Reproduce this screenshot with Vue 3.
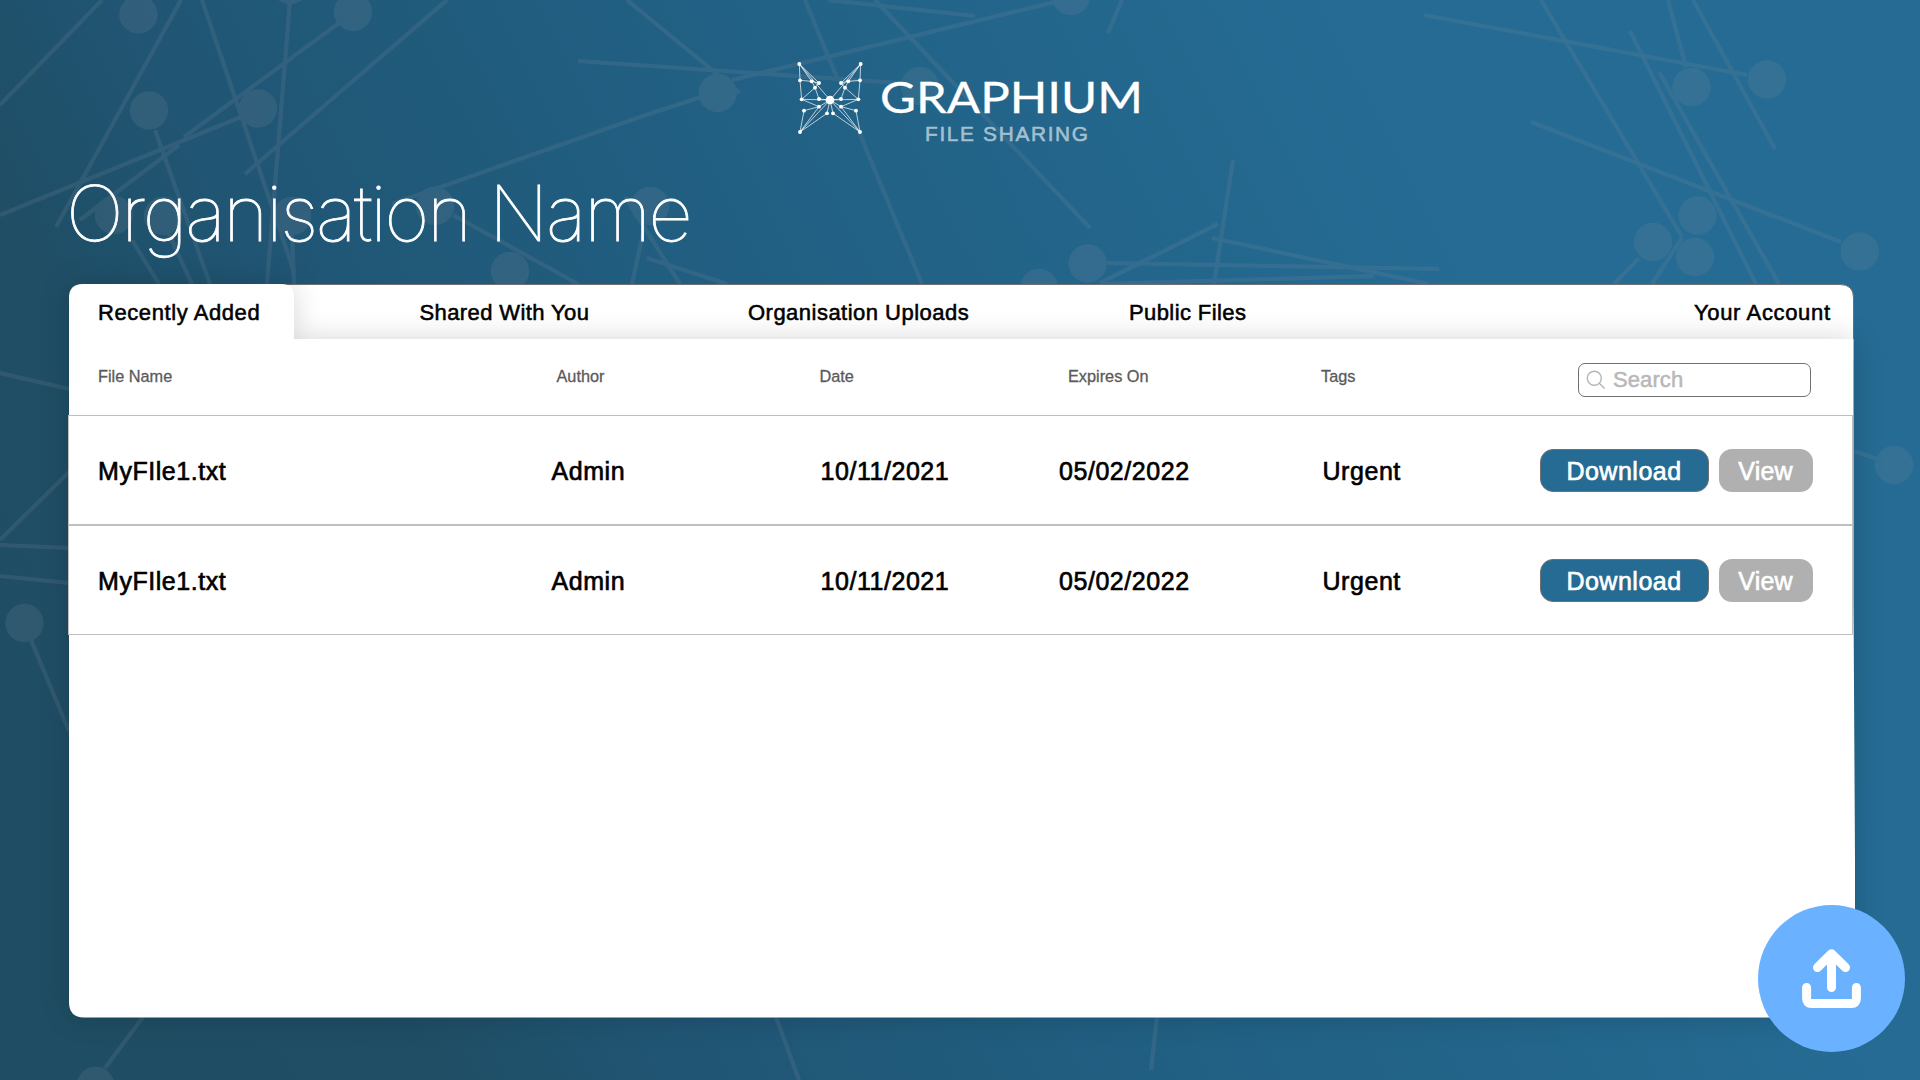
<script setup>
const links = [
  [102, 0, 0, 105], [181, 0, 56, 227], [202, 0, 294, 272], [290, 0, 267, 284],
  [339, 23, 184, 137], [241, 117, 0, 215], [447, 0, 245, 174], [179, 145, 80, 220],
  [155, 130, 210, 284], [132, 240, 159, 284], [167, 230, 192, 284], [292, 233, 294, 284],
  [640, 117, 392, 204], [453, 215, 578, 284], [627, 0, 740, 93], [643, 233, 632, 284],
  [578, 61, 899, 83], [625, 197, 680, 284], [647, 258, 727, 284], [640, 117, 701, 97],
  [805, 0, 837, 78], [859, 132, 922, 284], [828, 0, 975, 16], [875, 0, 1090, 228],
  [1055, 2, 732, 80], [1122, 0, 1108, 33], [1233, 160, 1214, 284], [1218, 224, 1100, 283],
  [1107, 263, 1439, 269], [1100, 284, 1374, 276], [1212, 238, 1429, 284],
  [1541, 0, 1682, 237], [1424, 15, 1747, 75], [1668, 0, 1686, 67], [1693, 0, 1775, 149],
  [1630, 31, 1756, 284], [1659, 72, 1779, 284], [1531, 122, 1841, 242],
  [1639, 258, 1614, 284], [1682, 238, 1652, 284], [1854, 451, 1880, 460],
  [0, 373, 69, 389], [69, 472, 0, 540], [0, 545, 69, 548], [0, 576, 69, 583],
  [31, 640, 69, 731], [143, 1017, 105, 1068], [776, 1017, 799, 1080], [1157, 1017, 1151, 1070]
]
const nodes = [
  [138.4, 14.5], [353, 12], [149, 110.5], [258, 108.5], [290, -15], [114, 215], [163, 216],
  [292, 216], [435, 206], [510, 271], [-19, 124], [717.6, 93], [920, 86], [1071, -4],
  [650, 206], [1087.7, 263.5], [1039, 288], [1691.5, 87], [1767, 79.5], [1697.5, 215.5],
  [1653, 242], [1695, 257], [1859.7, 251.5], [1894, 465], [24.5, 623], [95.5, 1086]
]

const wingDots = [
  [43, 42], [45, 91], [80, 94], [102, 99], [90, 113], [50, 148],
  [102, 147], [102, 170], [57, 182], [126, 190], [45, 246]
]
const wingPath =
  'M43 42L45 91L50 148L135 150M43 42L80 94M43 42L135 150M43 42L102 99M45 91L80 94L102 99L90 113L80 94' +
  'M90 113L50 148M90 113L102 147M50 148L102 170L135 150M102 147L135 150' +
  'M102 170L57 182L45 246L102 170M45 246L135 150M45 246L126 190L135 150'

const tabs = ['Recently Added', 'Shared With You', 'Organisation Uploads', 'Public Files', 'Your Account']
const columns = ['File Name', 'Author', 'Date', 'Expires On', 'Tags']
const files = [
  { id: 1, cells: ['MyFIle1.txt', 'Admin', '10/11/2021', '05/02/2022', 'Urgent'] },
  { id: 2, cells: ['MyFIle1.txt', 'Admin', '10/11/2021', '05/02/2022', 'Urgent'] }
]
</script>

<template>
  <div class="page">
    <svg class="network" viewBox="0 0 1920 1080" aria-hidden="true">
      <g opacity="0.18" fill="#7e8ca0" stroke="#7e8ca0">
        <line
          v-for="(l, i) in links" :key="'l' + i"
          :x1="l[0]" :y1="l[1]" :x2="l[2]" :y2="l[3]" stroke-width="4.2"
        />
        <circle v-for="(n, i) in nodes" :key="'n' + i" :cx="n[0]" :cy="n[1]" r="19.2" stroke="none" />
      </g>
    </svg>

    <header class="brand">
      <svg class="butterfly" viewBox="0 0 270 285" aria-hidden="true">
        <g v-for="side in 2" :key="side" :transform="side === 2 ? 'translate(270 0) scale(-1 1)' : undefined">
          <path :d="wingPath" fill="none" stroke="#fff" stroke-opacity="0.75" stroke-width="2.8" />
          <circle v-for="(d, i) in wingDots" :key="i" :cx="d[0]" :cy="d[1]" r="5.8" fill="#fff" />
        </g>
        <circle cx="135" cy="150" r="13" fill="#fff" />
      </svg>
      <svg class="wordmark" viewBox="0 0 270 75">
        <text class="word" x="2" y="48" textLength="263" lengthAdjust="spacingAndGlyphs">GRAPHIUM</text>
        <text class="sub" x="47" y="76" textLength="163" lengthAdjust="spacing">FILE SHARING</text>
      </svg>
    </header>

    <h1 class="title">Organisation Name</h1>

    <main class="panel">
      <svg class="sheet" viewBox="0 0 1920 1080" aria-hidden="true">
        <path d="M69.500 360V297Q69.500 284.500 82 284.500H1840Q1853.500 284.500 1853.500 298V360Z" fill="#fff" stroke="#707070" />
        <path
          class="sheet-body"
          d="M69 298Q69 284 83 284H281Q294 284 294 297V339H1853.500V600L1855 860V1017.400H84Q69 1017.400 69 1002Z"
          fill="#fff"
        />
      </svg>

      <nav class="tabs">
        <a v-for="(t, i) in tabs" :key="t" :class="['tab', 'tab-' + i]">{{ t }}</a>
      </nav>

      <div class="head">
        <span v-for="(c, i) in columns" :key="c" :class="['col', 'col-' + i]">{{ c }}</span>
        <label class="search">
          <svg viewBox="0 0 20 20" width="20" height="20" fill="none" stroke="#b4b4b4" stroke-width="1.4">
            <circle cx="8.300" cy="8.300" r="7" />
            <path d="M13.300 13.300L18.600 18.600" />
          </svg>
          <span>Search</span>
        </label>
      </div>

      <div v-for="f in files" :key="f.id" class="row">
        <span v-for="(c, i) in f.cells" :key="i" :class="['cell', 'cell-' + i]">{{ c }}</span>
        <div class="actions">
          <button class="btn download">Download</button>
          <button class="btn view">View</button>
        </div>
      </div>
    </main>

    <button class="upload" aria-label="Upload">
      <svg viewBox="0 0 147 147" fill="none" stroke="#fff" stroke-width="9" stroke-linecap="round" stroke-linejoin="round">
        <path d="M73.500 82.500V49M59.500 62.500L73.500 48.700L87.500 62.500" />
        <path d="M48.600 82.500V93.500Q48.600 98.500 53.600 98.500H93.400Q98.400 98.500 98.400 93.500V82.500" />
      </svg>
    </button>
  </div>
</template>

<style>
body {
  margin: 0;
}
</style>

<style scoped>
.page {
  position: relative;
  width: 1920px;
  height: 1080px;
  overflow: hidden;
  font-family: "Liberation Sans", Arial, sans-serif;
  color: #000;
  background: linear-gradient(63deg, #1f4d63 0%, #1f4e65 18%, #205573 27%, #215f82 47%, #256b93 76%, #256b93 100%);
}
.network {
  position: absolute;
  inset: 0;
  width: 1920px;
  height: 1080px;
}
.brand {
  position: relative;
  display: flex;
  padding: 50px 0 0 785px;
  height: 95px;
}
.butterfly {
  width: 90px;
  height: 95px;
}
.wordmark {
  width: 270px;
  height: 75px;
  margin: 15px 0 0 3px;
  overflow: visible;
}
.word {
  font: 400 42.5px Lato, sans-serif;
  fill: #fff;
  stroke: #fff;
  stroke-width: 0.3px;
}
.sub {
  font: 20.8px "Liberation Sans", Arial, sans-serif;
  fill: #a3bfd0;
  stroke: #a3bfd0;
  stroke-width: 0.6px;
}
.title {
  position: relative;
  margin: 23px 0 0 66px;
  height: 116px;
  line-height: 90px;
  font-family: Inter, sans-serif;
  font-weight: 100;
  font-size: 77px;
  letter-spacing: -2.3px;
  color: #fff;
  -webkit-text-stroke: 0.8px #fff;
  white-space: nowrap;
}
.panel {
  position: relative;
  width: 1785px;
  margin-left: 68px;
}
.sheet {
  position: absolute;
  left: -68px;
  top: -284px;
  width: 1920px;
  height: 1080px;
  z-index: 0;
}
.sheet-body {
  filter: drop-shadow(0 0 14px rgba(0, 0, 0, 0.16));
}
.tabs,
.head,
.row {
  position: relative;
  display: grid;
  white-space: nowrap;
}
.tabs {
  grid-template-columns: 321.5px 328.5px 381px 565px 1fr;
  height: 55px;
  padding-left: 30px;
  line-height: 58px;
  font-size: 22px;
  letter-spacing: 0.4px;
  -webkit-text-stroke: 0.55px #000;
}
.tab-0 {
  letter-spacing: 0.58px;
}
.tab-2 {
  letter-spacing: 0.48px;
}
.tab-4 {
  letter-spacing: 0.65px;
}
.head {
  grid-template-columns: 458.5px 263px 248.5px 253px 256px 234px;
  height: 76px;
  padding-left: 30px;
  line-height: 75px;
  font-size: 16.3px;
  color: #5a5a5a;
  -webkit-text-stroke: 0.3px #5a5a5a;
}
.search {
  box-sizing: border-box;
  display: flex;
  align-items: center;
  gap: 7px;
  width: 233px;
  height: 34px;
  margin-top: 24px;
  margin-left: 1px;
  padding-left: 7px;
  border: 1px solid #707070;
  border-radius: 7px;
  background: #fff;
  font-size: 22px;
  line-height: 36px;
  letter-spacing: 0.1px;
  color: #b8b8b8;
  -webkit-text-stroke: 0.5px #b8b8b8;
}
.row {
  box-sizing: border-box;
  grid-template-columns: 453.500px 269px 238.500px 263.500px 217px 1fr;
  height: 110px;
  padding-left: 29px;
  border: 1px solid #bfbfbf;
  line-height: 110px;
  font-size: 25px;
  letter-spacing: 0.55px;
  -webkit-text-stroke: 0.65px #000;
}
.actions {
  display: flex;
  align-items: flex-start;
  gap: 10px;
  padding-top: 33px;
}
.btn {
  box-sizing: border-box;
  height: 43px;
  padding: 2px 0 0;
  border: 0;
  border-radius: 13px;
  color: #fff;
  font: 25px/41px "Liberation Sans", Arial, sans-serif;
  letter-spacing: 0.5px;
  -webkit-text-stroke: 0.65px #fff;
}
.download {
  width: 169px;
  border: 1px solid #707070;
  line-height: 39px;
  background: #256b93;
}
.view {
  width: 94px;
  letter-spacing: 0.2px;
  background: #b0b0b0;
}
.upload {
  position: absolute;
  left: 1758px;
  top: 905px;
  width: 147px;
  height: 147px;
  padding: 0;
  border: 0;
  border-radius: 50%;
  background: #6ab2ff;
}
.upload svg {
  display: block;
  width: 147px;
  height: 147px;
}
</style>
